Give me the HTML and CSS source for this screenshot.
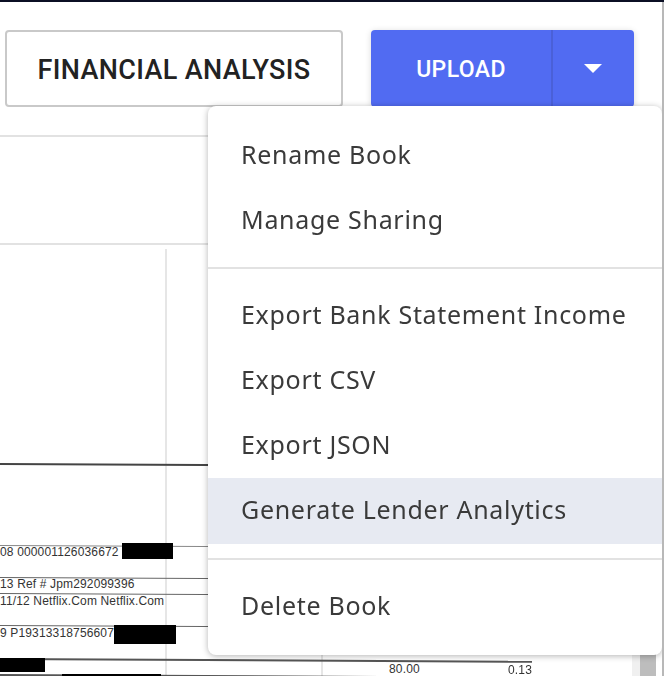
FILE: index.html
```html
<!DOCTYPE html>
<html lang="en">
<head>
    <meta charset="UTF-8">
    <meta name="viewport" content="width=device-width, initial-scale=1.0">
    <title>Book</title>
    <link rel="stylesheet" href="styles.css">
</head>
<body>
    <div class="top-edge"></div>
    <div class="right-edge"></div>
    <div class="page">
        <div class="toolbar">
            <button class="outline-button">FINANCIAL ANALYSIS</button>
            <div class="split-button">
                <button class="upload-button">UPLOAD</button>
                <button class="caret-button"><span class="caret"></span></button>
            </div>
        </div>
        <div class="viewer-bar"></div>

        <!-- scanned statement behind the menu -->
        <div class="scan">
            <div class="scan-column"></div>
            <div class="scan-column-faint"></div>
            <div class="scan-rule rule-top"></div>
            <div class="scan-rule rule-a"></div>
            <div class="scan-rule rule-b"></div>
            <div class="scan-rule rule-c"></div>
            <div class="scan-rule rule-d"></div>
            <div class="scan-rule rule-e"></div>
            <div class="scan-rule rule-f"></div>
            <div class="scan-text text-a">08 000001126036672</div>
            <div class="scan-text text-b">13 Ref # Jpm292099396</div>
            <div class="scan-text text-c">11/12 Netflix.Com Netflix.Com</div>
            <div class="scan-text text-d">9 P19313318756607</div>
            <div class="redact redact-a"></div>
            <div class="redact redact-b"></div>
            <div class="redact redact-c"></div>
            <div class="redact redact-d"></div>
            <div class="scan-text amount-a">80.00</div>
            <div class="scan-text amount-b">0.13</div>
        </div>

        <div class="scrollbar"><div class="scroll-thumb"></div></div>

        <div class="menu">
            <div class="menu-group">
                <div class="menu-item">Rename Book</div>
                <div class="menu-item">Manage Sharing</div>
            </div>
            <div class="menu-group">
                <div class="menu-item">Export Bank Statement Income</div>
                <div class="menu-item">Export CSV</div>
                <div class="menu-item">Export JSON</div>
                <div class="menu-item active">Generate Lender Analytics</div>
            </div>
            <div class="menu-group">
                <div class="menu-item">Delete Book</div>
            </div>
        </div>
    </div>
</body>
</html>
```
FILE: styles.css
```css
html, body {
    margin: 0;
    padding: 0;
    height: 676px;
    overflow: hidden;
    background: #fff;
}
body {
    font-family: 'Noto Sans', 'Liberation Sans', sans-serif;
    color: #3a3a3a;
}
.top-edge {
    height: 2px;
    background: #0b0f24;
}
.right-edge {
    position: absolute;
    top: 2px;
    right: 0;
    bottom: 0;
    width: 2px;
    background: #b8b8b8;
    z-index: 3;
}
.page {
    position: relative;
    height: 674px;
    overflow: hidden;
}
.toolbar {
    display: flex;
    align-items: flex-start;
    padding: 28px 0 0 5px;
    height: 77px;
}
.outline-button {
    width: 338px;
    height: 77px;
    background: #fff;
    border: 2px solid #c9c9c9;
    border-radius: 4px;
    font-family: 'Roboto', sans-serif;
    font-size: 27px;
    font-weight: 500;
    letter-spacing: 0.35px;
    color: #222;
    padding: 2px 0 0;
}
.split-button {
    display: flex;
    margin-left: 28px;
    height: 77px;
    border-radius: 4px;
    background: #516bf2;
    box-shadow: 0 1px 6px rgba(0, 0, 0, 0.15);
}
.upload-button, .caret-button {
    background: none;
    border: none;
    padding: 0;
    color: #fff;
    font-family: 'Roboto', sans-serif;
    font-size: 23px;
    font-weight: 500;
    letter-spacing: 0.4px;
}
.upload-button {
    width: 182px;
    padding-top: 2px;
    border-right: 2px solid #4a60d8;
}
.caret-button {
    width: 81px;
    padding-right: 2px;
    display: flex;
    align-items: center;
    justify-content: center;
}
.caret {
    width: 0;
    height: 0;
    border-left: 9px solid transparent;
    border-right: 9px solid transparent;
    border-top: 9px solid #fff;
}
.viewer-bar {
    margin-top: 28px;
    height: 106px;
    border-top: 2px solid #e2e2e2;
    border-bottom: 2px solid #e2e2e2;
}
.scan {
    position: absolute;
    left: 0;
    top: 243px;
    width: 640px;
    height: 431px;
    background: #fff;
    filter: blur(0.4px);
}
.scan-column, .scan-column-faint {
    position: absolute;
    top: 4px;
    bottom: 0;
    width: 2px;
    background: #e6e6e6;
}
.scan-column { left: 165px; }
.scan-column-faint { left: 321px; }
.scan-rule {
    position: absolute;
    left: 0;
    right: 0;
    height: 1px;
    background: #666;
    transform: rotate(0.3deg);
    transform-origin: left center;
}
.rule-top { top: 218px; height: 2px; background: #444; }
.rule-a { top: 300px; background: #888; }
.rule-b { top: 332px; }
.rule-c { top: 348px; }
.rule-d { top: 380px; }
.rule-e { top: 413px; right: 108px; height: 2px; background: #555; }
.rule-f { top: 429px; height: 2px; background: #555; }
.scan-text {
    position: absolute;
    left: 0;
    font-family: 'Liberation Sans', sans-serif;
    font-size: 12px;
    letter-spacing: 0.15px;
    line-height: 14px;
    color: #333;
    white-space: nowrap;
}
.text-a { top: 300px; }
.text-b { top: 332px; }
.text-c { top: 349px; }
.text-d { top: 381px; }
.amount-a { top: 420px; left: 389px; line-height: 9px; }
.amount-b { top: 421px; left: 508px; line-height: 9px; }
.redact {
    position: absolute;
    background: #000;
}
.redact-a { left: 122px; top: 298px; width: 51px; height: 16px; }
.redact-b { left: 114px; top: 380px; width: 62px; height: 19px; }
.redact-c { left: 0; top: 413px; width: 45px; height: 14px; }
.redact-d { left: 62px; top: 429px; width: 99px; height: 2px; }
.scrollbar {
    position: absolute;
    right: 2px;
    top: 248px;
    bottom: 0;
    width: 30px;
    background: #fff;
}
.scrollbar::before {
    content: "";
    position: absolute;
    left: 0;
    top: 0;
    bottom: 0;
    width: 8px;
    background: #f0f0f0;
}
.scroll-thumb {
    position: absolute;
    left: 8px;
    width: 16px;
    top: 0;
    bottom: 0;
    background: #bdbdbd;
}
.menu {
    position: absolute;
    z-index: 2;
    left: 208px;
    top: 104px;
    width: 454px;
    height: 549px;
    background: #fff;
    border-radius: 8px;
    box-shadow: 0 1px 6px rgba(0, 0, 0, 0.3);
    overflow: hidden;
}
.menu-group {
    padding: 14px 0 13px;
    border-bottom: 2px solid #e2e2e2;
}
.menu-group:first-child {
    padding-top: 17px;
}
.menu-group:nth-child(2) {
    padding-bottom: 14px;
}
.menu-group:last-child {
    border-bottom: none;
}
.menu-item {
    height: 65.3px;
    line-height: 63px;
    padding-left: 33px;
    font-size: 25px;
    letter-spacing: 0.7px;
    white-space: nowrap;
}
.menu-item.active {
    background: #e7eaf2;
}
```
